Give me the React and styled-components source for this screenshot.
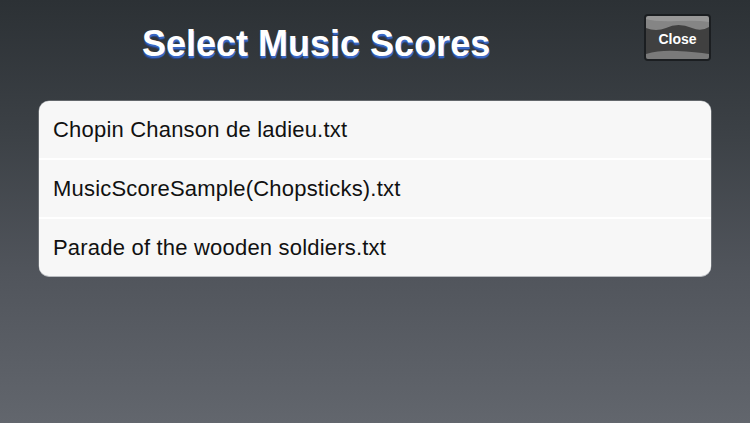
import React from 'react';
import styled, { createGlobalStyle } from 'styled-components';

const GlobalStyle = createGlobalStyle`
  html, body {
    margin: 0;
    padding: 0;
  }
  body {
    font-family: "Liberation Sans", Arial, sans-serif;
    background: #2d3236;
  }
`;

const Screen = styled.div`
  width: 750px;
  height: 423px;
  overflow: hidden;
  background: linear-gradient(180deg, #2c3135 0%, #3b4045 30%, #51555c 65%, #62666d 100%);
  display: flex;
  flex-direction: column;
`;

const Header = styled.header`
  display: flex;
  align-items: flex-start;
  height: 101px;
  box-sizing: border-box;
  padding: 14px 39px 0 142px;
`;

const Title = styled.h1`
  flex: 1;
  margin: 10px 0 0;
  font-size: 36px;
  font-weight: bold;
  color: #ffffff;
  line-height: 40px;
  text-shadow: 1px 2px 0 #3a68c4, 0 3px 1px rgba(40, 80, 170, 0.7);
`;

const CloseButton = styled.button`
  position: relative;
  width: 67px;
  height: 47px;
  padding: 0;
  border: 2px solid #1b1e21;
  border-radius: 4px;
  background: #404040;
  color: #ffffff;
  font-family: "Liberation Sans", Arial, sans-serif;
  font-size: 14px;
  font-weight: bold;
  box-sizing: border-box;
  overflow: hidden;
  cursor: pointer;
`;

const Gloss = styled.svg`
  position: absolute;
  left: 0;
  top: 0;
  width: 100%;
  height: 100%;
`;

const ButtonLabel = styled.span`
  position: relative;
  display: block;
  margin-top: 2px;
`;

const List = styled.ul`
  list-style: none;
  margin: 0 39px;
  padding: 0;
  background: #f7f7f7;
  border-radius: 10px;
  overflow: hidden;
  box-shadow: 0 1px 0 #b9bcc0, 0 0 0 0.5px #8d9196;
`;

const Row = styled.li`
  display: flex;
  align-items: center;
  padding-left: 14px;
  font-size: 22px;
  letter-spacing: 0.2px;
  color: #111111;
  border-top: ${p => (p.first ? 'none' : '2px solid #ffffff')};
  box-sizing: border-box;
  height: ${p => (p.first ? '57px' : '59px')};
`;

const files = [
  'Chopin Chanson de ladieu.txt',
  'MusicScoreSample(Chopsticks).txt',
  'Parade of the wooden soldiers.txt',
];

export default function App() {
  return (
    <>
      <GlobalStyle />
      <Screen>
        <Header>
          <Title>Select Music Scores</Title>
          <CloseButton>
            <Gloss viewBox="0 0 63 43" preserveAspectRatio="none">
              <path d="M3 0 H60 Q63 0 63 3 V11 Q55 16 46 12 Q32 6 20 12 Q10 16 0 12 V3 Q0 0 3 0 Z" fill="#858585" />
              <path d="M0 3 Q10 6 31 5 Q52 4 63 6 V0 H0 Z" fill="#a5a5a5" opacity="0.6" />
              <path d="M0 38 Q14 34 31 35 Q50 36 63 38 V43 H0 Z" fill="#7a7a7a" />
            </Gloss>
            <ButtonLabel>Close</ButtonLabel>
          </CloseButton>
        </Header>
        <List>
          {files.map((f, i) => (
            <Row key={f} first={i === 0}>{f}</Row>
          ))}
        </List>
      </Screen>
    </>
  );
}
